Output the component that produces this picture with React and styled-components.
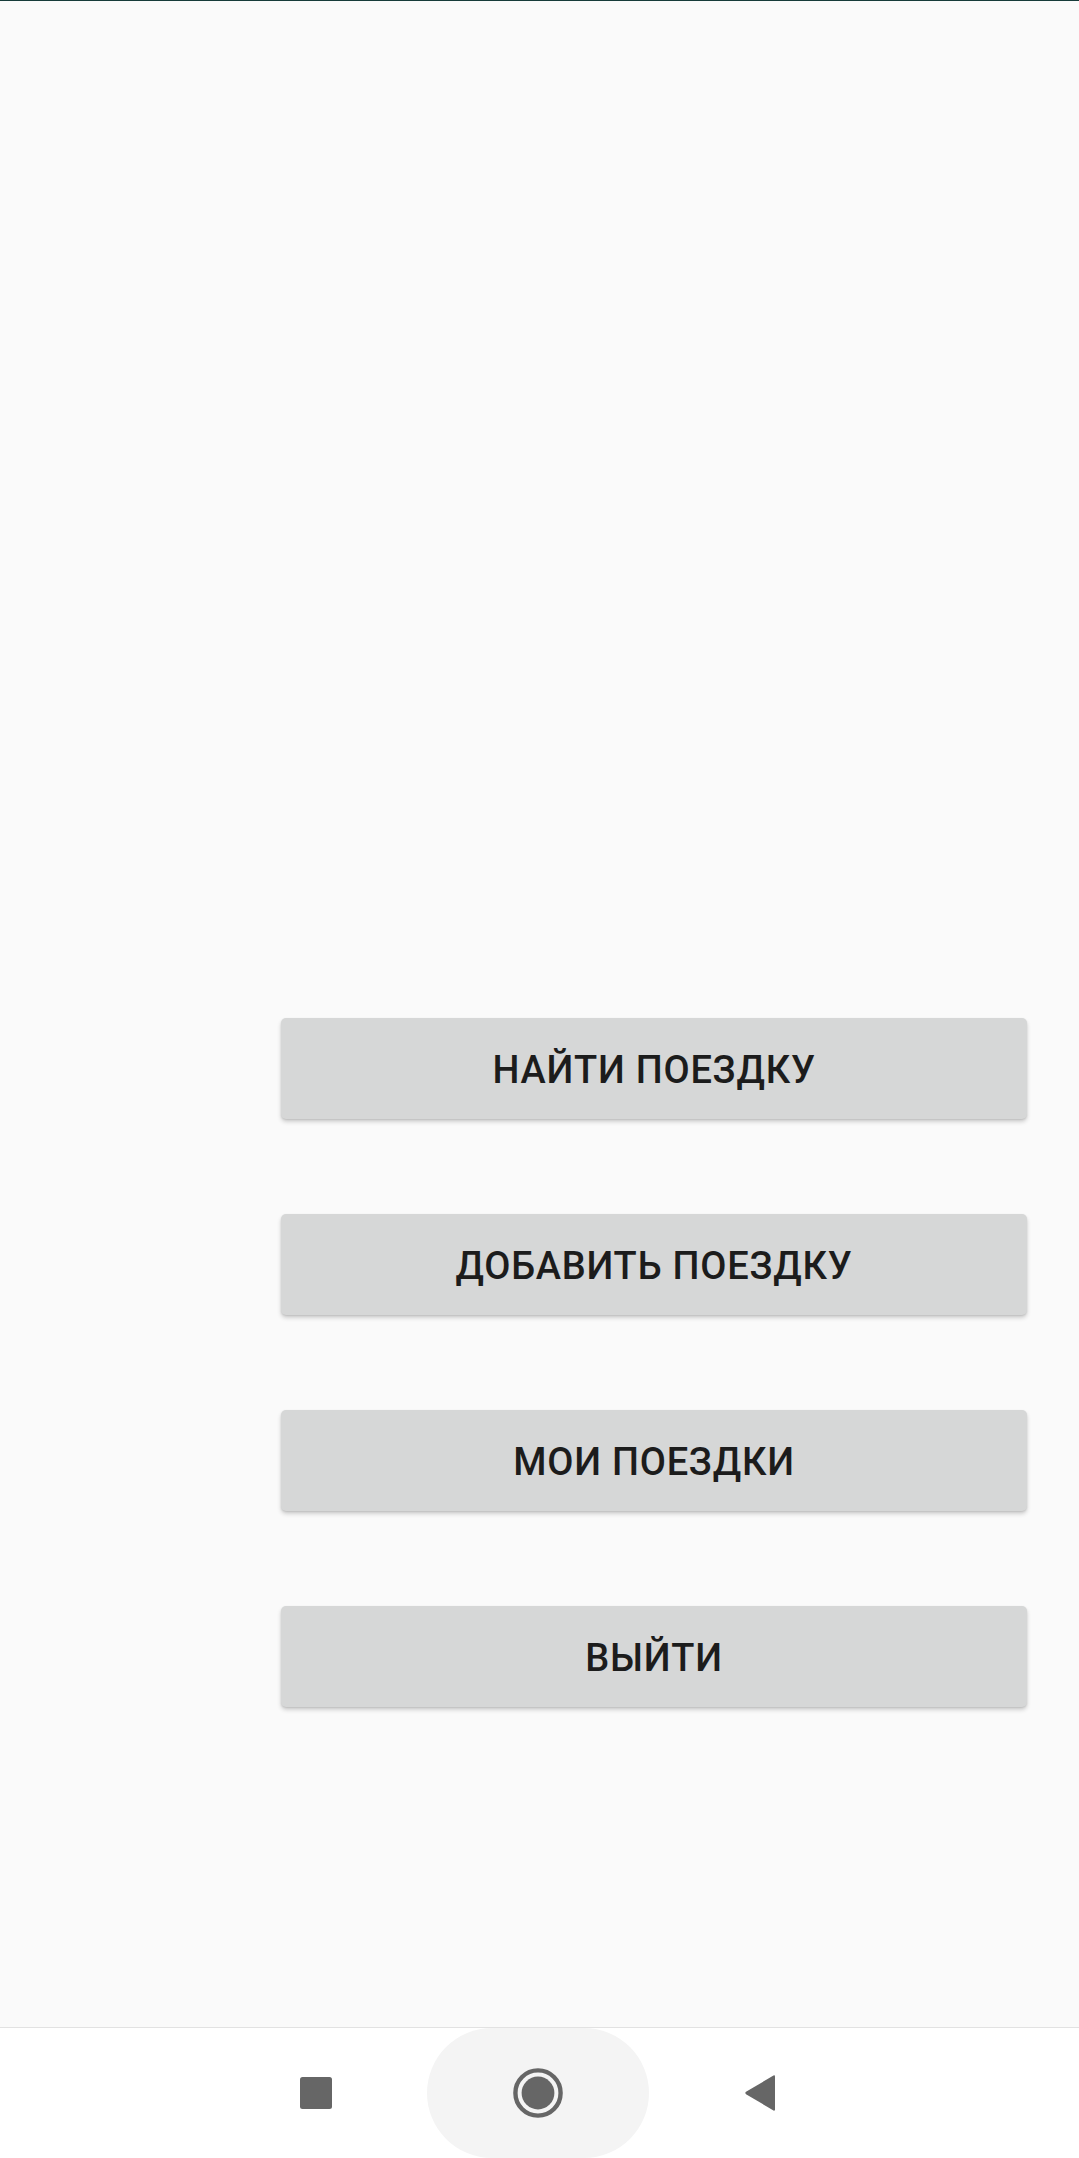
import React from "react";
import styled, { createGlobalStyle } from "styled-components";

const Global = createGlobalStyle`
  html, body { margin: 0; padding: 0; background: #fafafa; }
  body { font-family: Roboto, "Noto Sans", "Liberation Sans", sans-serif; }
`;

const Screen = styled.div`
  width: 1079px;
  height: 2158px;
  display: flex;
  flex-direction: column;
  background: #fafafa;
  overflow: hidden;
`;

const StatusEdge = styled.div`
  height: 1px;
  background: #163b39;
  flex: none;
`;

const Content = styled.main`
  flex: 1;
  display: flex;
  flex-direction: column;
  gap: 95px;
  padding: 1017px 52px 0 281px;
`;

const MenuButton = styled.button`
  height: 101px;
  width: 100%;
  border: none;
  border-radius: 5px;
  background: #d6d7d7;
  box-shadow: 0 3px 4px rgba(0, 0, 0, 0.17), 0 1px 2px rgba(0, 0, 0, 0.1);
  font-family: Roboto, "Noto Sans", sans-serif;
  font-weight: 500;
  font-size: 38px;
  letter-spacing: 0.02em;
  color: #1c1c1c;
  text-transform: uppercase;
  display: flex;
  align-items: center;
  justify-content: center;
  padding: 3px 0 0;
`;

const NavBar = styled.nav`
  flex: none;
  height: 130px;
  border-top: 1px solid #e2e2e2;
  background: #ffffff;
  display: flex;
  justify-content: flex-start;
  align-items: center;
  padding-left: 205px;
`;

const NavSlot = styled.div`
  width: 222px;
  height: 130px;
  display: flex;
  align-items: center;
  justify-content: center;
  background: ${(p) => (p.$pill ? "#f4f4f4" : "transparent")};
  border-radius: ${(p) => (p.$pill ? "66px" : "0")};
`;

const items = ["Найти поездку", "Добавить поездку", "Мои поездки", "Выйти"];

export default function App() {
  return (
    <Screen>
      <Global />
      <StatusEdge />
      <Content>
        {items.map((t) => (
          <MenuButton key={t}>{t}</MenuButton>
        ))}
      </Content>
      <NavBar>
        <NavSlot>
          <svg width="32" height="32" viewBox="0 0 32 32">
            <rect x="0" y="0" width="32" height="32" rx="2.5" fill="#666666" />
          </svg>
        </NavSlot>
        <NavSlot $pill>
          <svg width="50" height="50" viewBox="0 0 50 50">
            <circle cx="25" cy="25" r="22.6" fill="none" stroke="#666666" strokeWidth="4.4" />
            <circle cx="25" cy="25" r="16.4" fill="#666666" />
          </svg>
        </NavSlot>
        <NavSlot>
          <svg width="32" height="38" viewBox="0 0 32 38">
            <path
              d="M29.5 1.5 Q31 0.8 31 2.8 L31 35.2 Q31 37.2 29.5 36.5 L2 20.2 Q0.6 19 2 17.8 Z"
              fill="#666666"
            />
          </svg>
        </NavSlot>
      </NavBar>
    </Screen>
  );
}
